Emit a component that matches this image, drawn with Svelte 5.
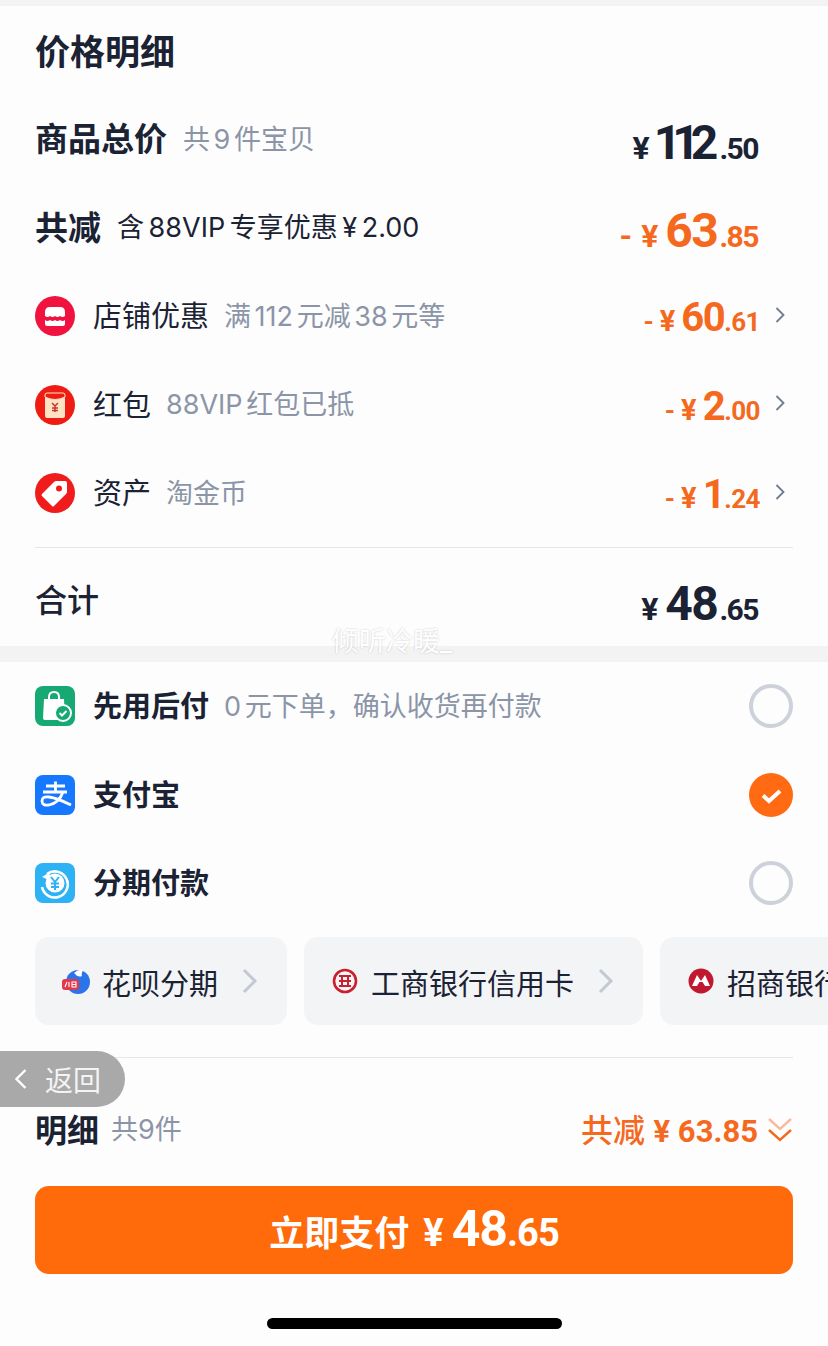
<script>
  const discounts = [
    { icon: "shop", name: "店铺优惠", note: "满 112 元减 38 元等", int: "60", dec: ".61" },
    { icon: "packet", name: "红包", note: "88VIP 红包已抵", int: "2", dec: ".00" },
    { icon: "tag", name: "资产", note: "淘金币", int: "1", dec: ".24" }
  ];

  const payments = [
    { icon: "later", name: "先用后付", note: "0 元下单，确认收货再付款", checked: false },
    { icon: "alipay", name: "支付宝", note: "", checked: true },
    { icon: "instal", name: "分期付款", note: "", checked: false }
  ];

  const plans = [
    { icon: "huabei", name: "花呗分期" },
    { icon: "icbc", name: "工商银行信用卡" },
    { icon: "cmb", name: "招商银行信用卡" }
  ];
</script>

<main>
  <div class="band top"></div>

  <section class="prices">
    <h1>价格明细</h1>

    <div class="row">
      <span class="label">商品总价</span>
      <span class="note">共 9 件宝贝</span>
      <span class="price ink">
        <span class="yen">¥</span><span class="int ones">112</span><span class="dec">.50</span>
      </span>
    </div>

    <div class="row">
      <span class="label">共减</span>
      <span class="note dark">含 88VIP 专享优惠 ¥ 2.00</span>
      <span class="price orange">
        <span class="minus">-</span><span class="yen">¥</span><span class="int">63</span><span class="dec">.85</span>
      </span>
    </div>

    {#each discounts as d}
      <div class="row small">
        <svg class="icon" viewBox="0 0 40 40">
          {#if d.icon === "shop"}
            <circle cx="20" cy="20" r="20" fill="#f0123f" />
            <path d="M10 20v-4q0-5 5-5h10q5 0 5 5v4q-2.500 2-5 0-2.500 2-5 0-2.500 2-5 0-2.500 2-5 0z" fill="#fff" />
            <path d="M10 24q2.500 2 5 0 2.500 2 5 0 2.500 2 5 0 2.500 2 5 0v4q0 2-2 2H12q-2 0-2-2z" fill="#fff" />
          {:else if d.icon === "packet"}
            <circle cx="20" cy="20" r="20" fill="#ee1c12" />
            <rect x="10" y="8" width="20" height="25" rx="2" fill="#fde3c4" />
            <path d="M10 10q0-2 2-2h16q2 0 2 2v2q-10 5-20 0z" fill="#ee1c12" stroke="#fde3c4" stroke-width="1" />
            <path d="M17 18l3 3 3-3M20 21v6M17 23h6M17 25.500h6" fill="none" stroke="#c8352a" stroke-width="1.500" />
          {:else}
            <circle cx="20" cy="20" r="20" fill="#f01c1c" />
            <path d="M21 8h9q2 0 2 2v9q0 1-1 2L19 33q-1 1-2 0L7 23q-1-1 0-2L19 9q1-1 2-1z" fill="#fff" />
            <circle cx="24" cy="15.500" r="3" fill="#f01c1c" />
          {/if}
        </svg>
        <span class="name">{d.name}</span>
        <span class="note">{d.note}</span>
        <span class="price orange">
          <span class="minus">-</span><span class="yen">¥</span><span class="int">{d.int}</span><span class="dec">{d.dec}</span>
        </span>
        <svg class="more" viewBox="0 0 10 18"><path d="M1.500 2l7 7-7 7" /></svg>
      </div>
    {/each}

    <div class="rule"></div>

    <div class="row total">
      <span class="label plain">合计</span>
      <span class="price ink">
        <span class="yen">¥</span><span class="int">48</span><span class="dec">.65</span>
      </span>
    </div>
  </section>

  <div class="band"></div>

  <section class="pay">
    {#each payments as p}
      <div class="row small">
        <svg class="icon" viewBox="0 0 40 40">
          {#if p.icon === "later"}
            <rect width="40" height="40" rx="8" fill="#16a974" />
            <path d="M9 13h20l1 20q0 1-1 1H10q-2 0-2-2z" fill="#fff" />
            <path d="M14 16v-5q0-5 5-5t5 5v5" fill="none" stroke="#fff" stroke-width="2" />
            <circle cx="28" cy="27" r="8" fill="#16a974" stroke="#fff" stroke-width="2" />
            <path d="M24.500 27l2.500 2.500 4.500-4.500" fill="none" stroke="#fff" stroke-width="2" />
          {:else if p.icon === "alipay"}
            <rect width="40" height="40" rx="8" fill="#1677ff" />
            <path d="M11 11h19M20.500 6.500v10M8 17h24M28 17q-4 11-14 13-7 1-7-4 0-5 7-4 8 1 22 8" fill="none" stroke="#fff" stroke-width="2.800" />
          {:else}
            <rect width="40" height="40" rx="8" fill="#2cb2f5" />
            <path d="M12 11a13 13 0 1 1-5 13" fill="none" stroke="#fff" stroke-width="2.600" />
            <path d="M7 14l8-5-1 8z" fill="#fff" />
            <circle cx="20" cy="20" r="9.500" fill="#fff" />
            <path d="M16 14l4 5 4-5M20 19v8M16 20.500h8M16 24h8" fill="none" stroke="#2cb2f5" stroke-width="2" />
          {/if}
        </svg>
        <span class="name strong">{p.name}</span>
        {#if p.note}<span class="note">{p.note}</span>{/if}
        <span class="radio" class:checked={p.checked}>
          {#if p.checked}
            <svg viewBox="0 0 44 44"><path d="M14 22.500l6 5.500 11-10" /></svg>
          {/if}
        </span>
      </div>
    {/each}

    <div class="plans">
      {#each plans as plan}
        <div class="plan">
          <svg class="plan-icon" viewBox="0 0 30 30">
            {#if plan.icon === "huabei"}
              <circle cx="17" cy="16" r="12" fill="#2b74ea" />
              <path d="M13 7q4-4 9-3-2 4-1 6-4 2-8-3z" fill="#fff" />
              <rect x="1" y="13" width="17" height="11" rx="3" fill="#e23a4b" />
              <path d="M4 21l2-5M8 16v5M11 16h4v5h-4zM11 18.500h4" fill="none" stroke="#fff" stroke-width="1.100" />
            {:else if plan.icon === "icbc"}
              <circle cx="15" cy="15" r="11" fill="none" stroke="#c8202f" stroke-width="2.600" />
              <path d="M9 10h12M9 20h12M12 10v10M18 10v10M9 15h12" fill="none" stroke="#c8202f" stroke-width="2" />
            {:else}
              <circle cx="15" cy="15" r="12.500" fill="#c2182f" />
              <path d="M6 20L11 9l4 6 4-6 5 11z" fill="#fff" />
              <path d="M11 20l2.500-4h3L19 20z" fill="#c2182f" />
            {/if}
          </svg>
          <span>{plan.name}</span>
          <svg class="plan-more" viewBox="0 0 16 26"><path d="M2 2l11 11L2 24" /></svg>
        </div>
      {/each}
    </div>

    <div class="rule"></div>

    <div class="detail">
      <span class="label">明细</span>
      <span class="count">共9件</span>
      <span class="saved">共减 <b>¥ 63.85</b></span>
      <svg class="fold" viewBox="0 0 26 26">
        <path d="M2 2l11 10L24 2" opacity=".45" />
        <path d="M2 13l11 10 11-10" />
      </svg>
    </div>

    <button>
      <span class="btn-text">立即支付</span>
      <span class="yen">¥</span><span class="int">48</span><span class="dec">.65</span>
    </button>
  </section>

  <div class="home"></div>

  <div class="watermark">倾听冷暖_</div>

  <div class="back">
    <svg viewBox="0 0 14 22"><path d="M11.500 2l-9 9 9 9" /></svg>
    <span>返回</span>
  </div>
</main>

<style>
  :global(body) {
    margin: 0;
    background: #fdfdfd;
  }

  main {
    position: relative;
    width: 828px;
    height: 1346px;
    overflow: hidden;
    background: #fdfdfd;
    color: #1a2233;
    font-family: Inter, "Noto Sans CJK SC", sans-serif;
  }

  .band {
    height: 16px;
    background: #f3f3f4;
  }

  .band.top {
    height: 6px;
  }

  .prices {
    height: 640px;
    padding: 0 35px;
    box-sizing: border-box;
  }

  .pay {
    padding: 0 35px;
  }

  h1 {
    margin: 0;
    height: 89px;
    line-height: 93px;
    font-size: 35px;
    font-weight: 700;
  }

  .row {
    display: flex;
    align-items: center;
    height: 88.5px;
  }

  .label {
    font-size: 33px;
    font-weight: 700;
    margin-right: 16px;
    margin-bottom: 4px;
  }

  .label.plain {
    font-size: 32px;
    font-weight: 500;
  }

  .note {
    font-size: 27px;
    color: #8b95a7;
    white-space: nowrap;
    word-spacing: -4px;
    margin-bottom: 4px;
  }

  .note.dark {
    color: #1a2233;
    word-spacing: -3px;
  }

  .icon {
    width: 40px;
    height: 40px;
    margin-right: 18px;
    flex-shrink: 0;
  }

  .name {
    font-size: 29px;
    margin-right: 15px;
    margin-bottom: 4px;
  }

  .name.strong {
    font-weight: 700;
  }

  .price {
    margin-left: auto;
    margin-right: 35px;
    display: flex;
    align-items: baseline;
    font-family: Roboto, sans-serif;
    font-weight: 700;
    font-size: 48px;
    padding-top: 6px;
  }

  .ink {
    color: #1a2233;
  }

  .orange {
    color: #f5691f;
  }

  .price .yen {
    font-size: 32px;
    margin-right: 7px;
  }

  .price .minus {
    font-size: 32px;
    margin-right: 9px;
  }

  .price .int {
    letter-spacing: -1.500px;
    margin-right: 2px;
  }

  .price .int.ones {
    letter-spacing: -9px;
    margin-left: -3px;
    margin-right: 10px;
  }

  .price .dec {
    font-size: 30px;
    letter-spacing: -1.500px;
  }

  .small .price {
    font-size: 40px;
    margin-right: 0;
    padding-top: 3px;
  }

  .small .price .yen {
    font-size: 29px;
    margin-right: 6px;
  }

  .small .price .minus {
    font-size: 26px;
    margin-right: 6px;
  }

  .small .price .int {
    margin-right: 0;
  }

  .small .price .dec {
    font-size: 26px;
    letter-spacing: -0.500px;
  }

  .more {
    width: 10px;
    height: 18px;
    margin-left: 15px;
    margin-right: 8px;
    margin-top: -3px;
    fill: none;
    stroke: #6f7c90;
    stroke-width: 1.800;
  }

  .rule {
    height: 1px;
    background: #e4e6ea;
    margin-top: 9px;
  }

  .row.total {
    height: 97px;
    padding-top: 8px;
    box-sizing: border-box;
  }

  .radio {
    margin-left: auto;
    width: 44px;
    height: 44px;
    box-sizing: border-box;
    border: 4px solid #cdd2da;
    border-radius: 50%;
  }

  .radio.checked {
    border: none;
    background: #ff6a12;
  }

  .radio svg {
    display: block;
    fill: none;
    stroke: #fff;
    stroke-width: 4;
  }

  .plans {
    display: flex;
    gap: 17px;
    margin-top: 9px;
    margin-right: -35px;
    overflow: hidden;
  }

  .plan {
    display: flex;
    align-items: center;
    flex-shrink: 0;
    height: 88px;
    padding: 2px 29px 0 26px;
    box-sizing: border-box;
    border-radius: 14px;
    background: #f3f4f6;
    font-size: 29px;
    white-space: nowrap;
  }

  .plan-icon {
    width: 30px;
    height: 30px;
    margin-right: 11px;
    margin-bottom: 2px;
  }

  .plan-more {
    width: 16px;
    height: 26px;
    margin-left: 24px;
    margin-bottom: 2px;
    fill: none;
    stroke: #c3c9d2;
    stroke-width: 3;
  }

  .pay .rule {
    margin-top: 32px;
  }

  .detail {
    display: flex;
    align-items: center;
    height: 56px;
    margin-top: 44px;
  }

  .detail .label {
    font-size: 32px;
    margin-right: 12px;
  }

  .count {
    font-size: 27px;
    color: #8b95a7;
    margin-bottom: 4px;
  }

  .saved {
    margin-left: auto;
    color: #f5691f;
    font-size: 32px;
    font-weight: 500;
    margin-bottom: 4px;
  }

  .saved b {
    font-family: Roboto, sans-serif;
    font-size: 31px;
    font-weight: 700;
  }

  .fold {
    width: 26px;
    height: 26px;
    margin-left: 9px;
    fill: none;
    stroke: #f5691f;
    stroke-width: 2.400;
  }

  button {
    display: flex;
    align-items: baseline;
    justify-content: center;
    width: 100%;
    height: 88px;
    margin-top: 28px;
    padding: 14px 0 0;
    box-sizing: border-box;
    border: none;
    border-radius: 14px;
    background: #ff6a0a;
    color: #fff;
    font-family: Roboto, sans-serif;
    font-weight: 700;
    font-size: 50px;
  }

  .btn-text {
    font-family: Inter, "Noto Sans CJK SC", sans-serif;
    font-size: 35px;
    margin-right: 14px;
  }

  button .yen {
    font-size: 38px;
    margin-right: 8px;
  }

  button .int {
    letter-spacing: -1px;
  }

  button .dec {
    font-size: 38px;
    letter-spacing: -1px;
  }

  .home {
    position: absolute;
    left: 267px;
    top: 1318px;
    width: 295px;
    height: 11px;
    border-radius: 6px;
    background: #000;
  }

  .watermark {
    position: absolute;
    left: 332px;
    top: 624px;
    font-size: 27px;
    line-height: 36px;
    color: #fff;
    text-shadow: 0 0 2px rgba(0, 0, 0, 0.22);
  }

  .back {
    position: absolute;
    left: 0;
    top: 1051px;
    width: 125px;
    height: 56px;
    display: flex;
    align-items: center;
    box-sizing: border-box;
    padding-left: 14px;
    border-radius: 0 28px 28px 0;
    background: #a9a9a9;
    color: #f4f4f4;
    font-size: 28px;
  }

  .back svg {
    width: 14px;
    height: 22px;
    margin-right: 17px;
    fill: none;
    stroke: #fff;
    stroke-width: 2.400;
  }
</style>
